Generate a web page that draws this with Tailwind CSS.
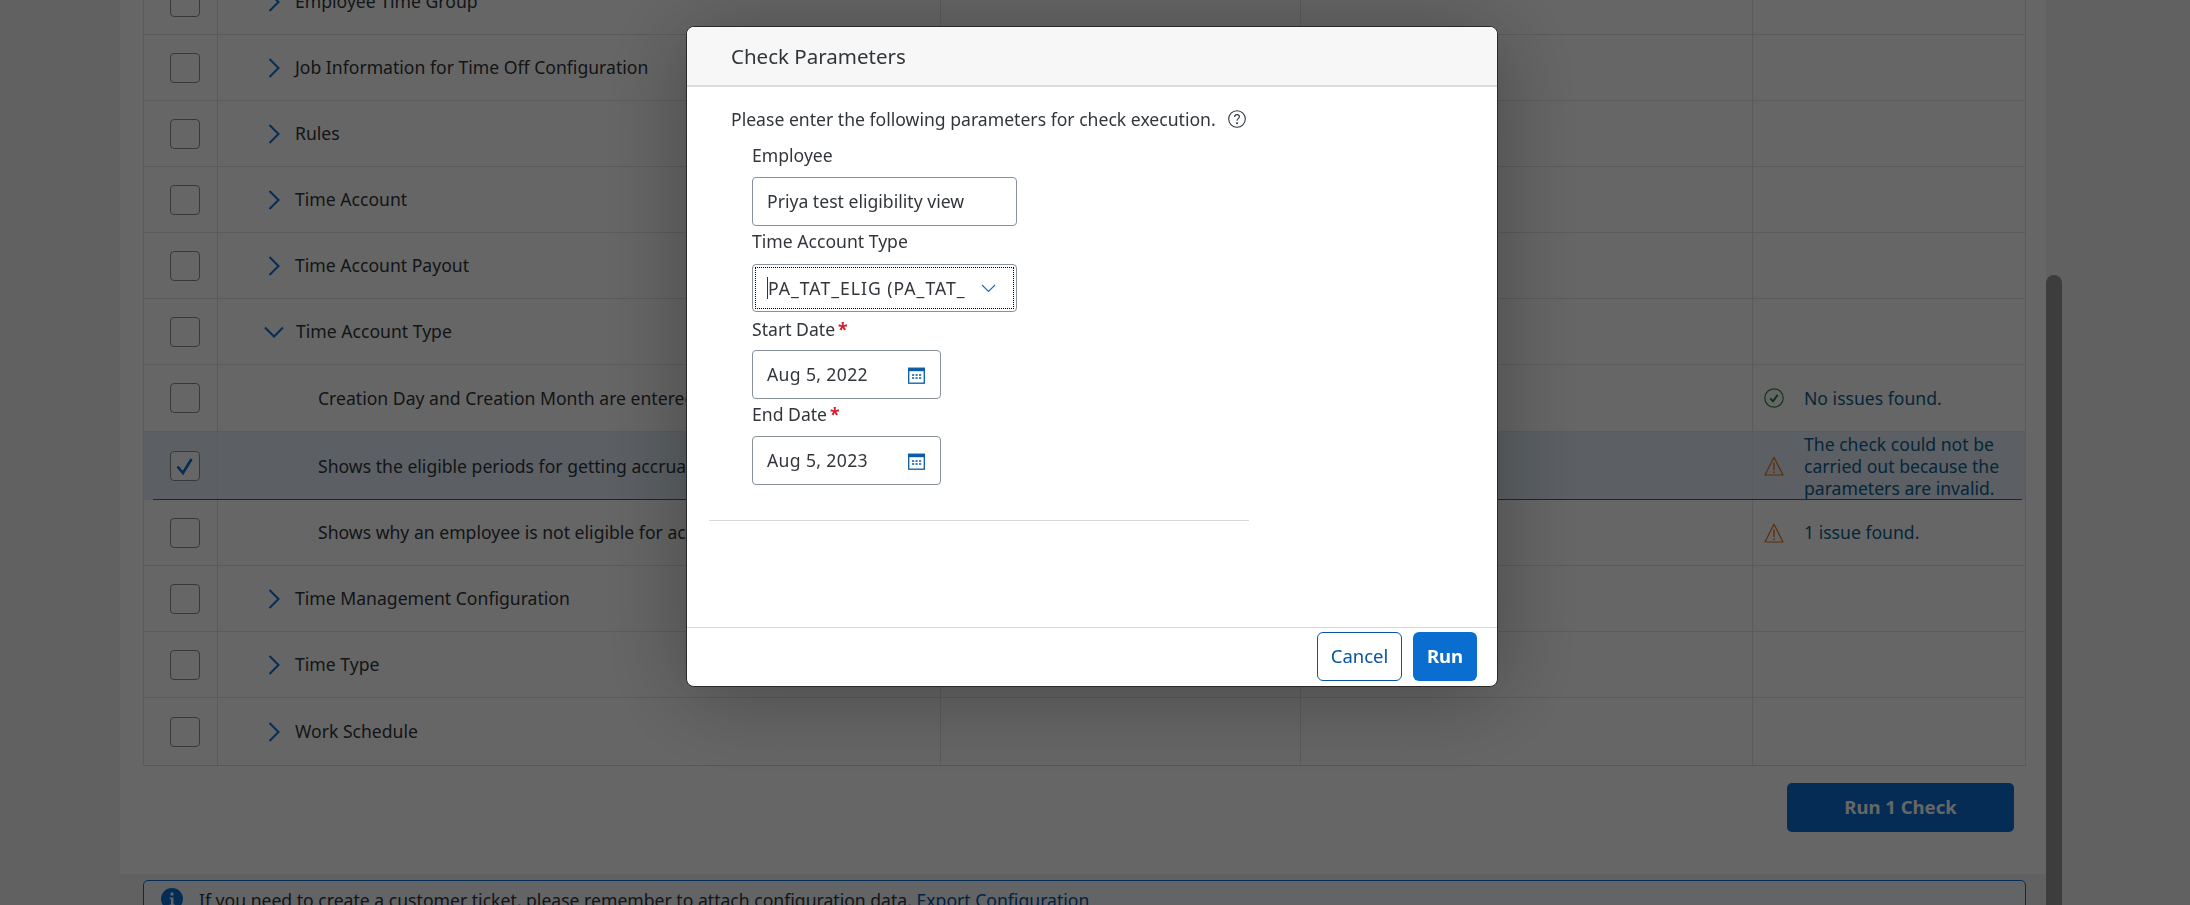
<!DOCTYPE html>
<html lang="en">
<head>
<meta charset="UTF-8">
<title>Check Parameters</title>
<script src="https://cdn.jsdelivr.net/npm/@tailwindcss/browser@4"></script>
</head>
<body class="h-[905px] overflow-hidden bg-[#f2f3f4] font-['Noto_Sans',sans-serif] text-[17.6px] text-[#32363a]">

<!-- Page behind the dialog -->
<div class="ml-[120px] h-[905px] w-[1926px] bg-white pl-[23px]">
  <div class="-mt-[31px] w-[1883px] border-x border-[#e4e4e4]">

    <div class="grid h-[66px] grid-cols-[74px_723px_360px_452px_1fr] border-b border-[#e4e4e4]">
      <div class="flex items-center border-r border-[#e4e4e4] pl-[26px]"><div class="size-[30px] rounded-[4px] border border-[#89919a] bg-white"></div></div>
      <div class="flex items-center border-r border-[#e4e4e4] pl-[50px]"><svg class="mr-[15px] h-[20px] w-[12px]" viewBox="0 0 12 20" fill="none" stroke="#0a6ed1" stroke-width="2"><path d="M1.5 1l9 9-9 9"/></svg>Employee Time Group</div>
      <div class="border-r border-[#e4e4e4]"></div><div class="border-r border-[#e4e4e4]"></div><div></div>
    </div>

    <div class="grid h-[66px] grid-cols-[74px_723px_360px_452px_1fr] border-b border-[#e4e4e4]">
      <div class="flex items-center border-r border-[#e4e4e4] pl-[26px]"><div class="size-[30px] rounded-[4px] border border-[#89919a] bg-white"></div></div>
      <div class="flex items-center border-r border-[#e4e4e4] pl-[50px]"><svg class="mr-[15px] h-[20px] w-[12px]" viewBox="0 0 12 20" fill="none" stroke="#0a6ed1" stroke-width="2"><path d="M1.5 1l9 9-9 9"/></svg>Job Information for Time Off Configuration</div>
      <div class="border-r border-[#e4e4e4]"></div><div class="border-r border-[#e4e4e4]"></div><div></div>
    </div>

    <div class="grid h-[66px] grid-cols-[74px_723px_360px_452px_1fr] border-b border-[#e4e4e4]">
      <div class="flex items-center border-r border-[#e4e4e4] pl-[26px]"><div class="size-[30px] rounded-[4px] border border-[#89919a] bg-white"></div></div>
      <div class="flex items-center border-r border-[#e4e4e4] pl-[50px]"><svg class="mr-[15px] h-[20px] w-[12px]" viewBox="0 0 12 20" fill="none" stroke="#0a6ed1" stroke-width="2"><path d="M1.5 1l9 9-9 9"/></svg>Rules</div>
      <div class="border-r border-[#e4e4e4]"></div><div class="border-r border-[#e4e4e4]"></div><div></div>
    </div>

    <div class="grid h-[66px] grid-cols-[74px_723px_360px_452px_1fr] border-b border-[#e4e4e4]">
      <div class="flex items-center border-r border-[#e4e4e4] pl-[26px]"><div class="size-[30px] rounded-[4px] border border-[#89919a] bg-white"></div></div>
      <div class="flex items-center border-r border-[#e4e4e4] pl-[50px]"><svg class="mr-[15px] h-[20px] w-[12px]" viewBox="0 0 12 20" fill="none" stroke="#0a6ed1" stroke-width="2"><path d="M1.5 1l9 9-9 9"/></svg>Time Account</div>
      <div class="border-r border-[#e4e4e4]"></div><div class="border-r border-[#e4e4e4]"></div><div></div>
    </div>

    <div class="grid h-[66px] grid-cols-[74px_723px_360px_452px_1fr] border-b border-[#e4e4e4]">
      <div class="flex items-center border-r border-[#e4e4e4] pl-[26px]"><div class="size-[30px] rounded-[4px] border border-[#89919a] bg-white"></div></div>
      <div class="flex items-center border-r border-[#e4e4e4] pl-[50px]"><svg class="mr-[15px] h-[20px] w-[12px]" viewBox="0 0 12 20" fill="none" stroke="#0a6ed1" stroke-width="2"><path d="M1.5 1l9 9-9 9"/></svg>Time Account Payout</div>
      <div class="border-r border-[#e4e4e4]"></div><div class="border-r border-[#e4e4e4]"></div><div></div>
    </div>

    <div class="grid h-[66px] grid-cols-[74px_723px_360px_452px_1fr] border-b border-[#e4e4e4]">
      <div class="flex items-center border-r border-[#e4e4e4] pl-[26px]"><div class="size-[30px] rounded-[4px] border border-[#89919a] bg-white"></div></div>
      <div class="flex items-center border-r border-[#e4e4e4] pl-[46px]"><svg class="mr-[12px] h-[12px] w-[20px]" viewBox="0 0 20 12" fill="none" stroke="#0a6ed1" stroke-width="2"><path d="M1 1.5l9 9 9-9"/></svg>Time Account Type</div>
      <div class="border-r border-[#e4e4e4]"></div><div class="border-r border-[#e4e4e4]"></div><div></div>
    </div>

    <!-- Check rows -->
    <div class="grid h-[67px] grid-cols-[74px_723px_360px_452px_1fr] border-b border-[#e4e4e4]">
      <div class="flex items-center border-r border-[#e4e4e4] pl-[26px]"><div class="size-[30px] rounded-[4px] border border-[#89919a] bg-white"></div></div>
      <div class="flex items-center whitespace-nowrap border-r border-[#e4e4e4] pl-[100px]">Creation Day and Creation Month are entered correctly</div>
      <div class="border-r border-[#e4e4e4]"></div><div class="border-r border-[#e4e4e4]"></div>
      <div class="flex items-center text-[#0f5f8f]"><svg class="ml-[11px] mr-[20px] size-[20px] shrink-0" viewBox="0 0 20 20" fill="none"><circle cx="10" cy="10" r="9.2" stroke="#2b8a3e" stroke-width="1.2"/><path d="M6.3 10.4l2.7 2.9 4.6-6.4" stroke="#107e3e" stroke-width="1.8"/></svg>No issues found.</div>
    </div>

    <div class="relative grid h-[68px] grid-cols-[74px_723px_360px_452px_1fr] bg-[#e5f0fa]">
      <div class="flex items-center border-r border-[#e4e4e4] pl-[26px]"><div class="flex size-[30px] items-center justify-center rounded-[4px] border border-[#89919a] bg-white"><svg class="size-[20px]" viewBox="0 0 20 20" fill="none" stroke="#0a6ed1" stroke-width="2.6"><path d="M2.5 10.5l5.5 6.5 8.5-14"/></svg></div></div>
      <div class="flex items-center whitespace-nowrap border-r border-[#e4e4e4] pl-[100px]">Shows the eligible periods for getting accrual</div>
      <div class="border-r border-[#e4e4e4]"></div><div class="border-r border-[#e4e4e4]"></div>
      <div class="flex items-center leading-[22px] text-[#0f5f8f]"><svg class="ml-[11px] mr-[20px] size-[20px] shrink-0" viewBox="0 0 20 20" fill="none"><path d="M10 1.2L19 19H1z" stroke="#e9730c" stroke-width="1.2" stroke-linejoin="round"/><path d="M10 6.5v7.5" stroke="#e9730c" stroke-width="1.4"/><circle cx="10" cy="16.2" r="0.9" fill="#e9730c"/></svg><span class="w-[210px]">The check could not be carried out because the parameters are invalid.</span></div>
      <div class="absolute bottom-0 left-[9px] right-[3px] h-px bg-[#0a6ed1]"></div>
    </div>

    <div class="grid h-[66px] grid-cols-[74px_723px_360px_452px_1fr] border-b border-[#e4e4e4]">
      <div class="flex items-center border-r border-[#e4e4e4] pl-[26px]"><div class="size-[30px] rounded-[4px] border border-[#89919a] bg-white"></div></div>
      <div class="flex items-center whitespace-nowrap border-r border-[#e4e4e4] pl-[100px]">Shows why an employee is not eligible for accrual</div>
      <div class="border-r border-[#e4e4e4]"></div><div class="border-r border-[#e4e4e4]"></div>
      <div class="flex items-center text-[#0f5f8f]"><svg class="ml-[11px] mr-[20px] size-[20px] shrink-0" viewBox="0 0 20 20" fill="none"><path d="M10 1.2L19 19H1z" stroke="#e9730c" stroke-width="1.2" stroke-linejoin="round"/><path d="M10 6.5v7.5" stroke="#e9730c" stroke-width="1.4"/><circle cx="10" cy="16.2" r="0.9" fill="#e9730c"/></svg>1 issue found.</div>
    </div>

    <div class="grid h-[66px] grid-cols-[74px_723px_360px_452px_1fr] border-b border-[#e4e4e4]">
      <div class="flex items-center border-r border-[#e4e4e4] pl-[26px]"><div class="size-[30px] rounded-[4px] border border-[#89919a] bg-white"></div></div>
      <div class="flex items-center border-r border-[#e4e4e4] pl-[50px]"><svg class="mr-[15px] h-[20px] w-[12px]" viewBox="0 0 12 20" fill="none" stroke="#0a6ed1" stroke-width="2"><path d="M1.5 1l9 9-9 9"/></svg>Time Management Configuration</div>
      <div class="border-r border-[#e4e4e4]"></div><div class="border-r border-[#e4e4e4]"></div><div></div>
    </div>

    <div class="grid h-[66px] grid-cols-[74px_723px_360px_452px_1fr] border-b border-[#e4e4e4]">
      <div class="flex items-center border-r border-[#e4e4e4] pl-[26px]"><div class="size-[30px] rounded-[4px] border border-[#89919a] bg-white"></div></div>
      <div class="flex items-center border-r border-[#e4e4e4] pl-[50px]"><svg class="mr-[15px] h-[20px] w-[12px]" viewBox="0 0 12 20" fill="none" stroke="#0a6ed1" stroke-width="2"><path d="M1.5 1l9 9-9 9"/></svg>Time Type</div>
      <div class="border-r border-[#e4e4e4]"></div><div class="border-r border-[#e4e4e4]"></div><div></div>
    </div>

    <div class="grid h-[68px] grid-cols-[74px_723px_360px_452px_1fr] border-b border-[#d9d9d9]">
      <div class="flex items-center border-r border-[#e4e4e4] pl-[26px]"><div class="size-[30px] rounded-[4px] border border-[#89919a] bg-white"></div></div>
      <div class="flex items-center border-r border-[#e4e4e4] pl-[50px]"><svg class="mr-[15px] h-[20px] w-[12px]" viewBox="0 0 12 20" fill="none" stroke="#0a6ed1" stroke-width="2"><path d="M1.5 1l9 9-9 9"/></svg>Work Schedule</div>
      <div class="border-r border-[#e4e4e4]"></div><div class="border-r border-[#e4e4e4]"></div><div></div>
    </div>
  </div>

  <div class="mt-[17px] flex w-[1871px] justify-end">
    <button class="h-[49px] w-[227px] rounded-[5px] bg-[#0a6ed1] pb-[2px] text-[18.5px] font-bold text-white">Run 1 Check</button>
  </div>

  <div class="mt-[48px] flex h-[60px] w-[1883px] items-start rounded-[5px] border border-[#0a6ed1] bg-[#f5faff] pl-[17px] pt-[7px]">
    <svg class="mr-[16px] size-[22px] shrink-0" viewBox="0 0 22 22"><circle cx="11" cy="11" r="11" fill="#0a6ed1"/><circle cx="11" cy="6" r="1.7" fill="#f5faff"/><path d="M8.5 9.5h4v7h1.5v1.5H8.5v-1.5H10V11H8.5z" fill="#f5faff"/></svg>
    <span class="leading-[24px]">If you need to create a customer ticket, please remember to attach configuration data. <a class="text-[#0854a0]">Export Configuration</a></span>
  </div>
</div>

<!-- Scrollbar -->
<div class="fixed left-[2046px] top-[275px] h-[700px] w-[16px] rounded-t-[8px] bg-[#999999]"></div>

<!-- Modal backdrop -->
<div class="fixed inset-0 bg-black/60"></div>

<!-- Dialog -->
<div class="fixed left-[686px] top-[26px] flex h-[661px] w-[812px] flex-col overflow-hidden rounded-[8px] border border-[#2a2a2a] bg-white shadow-[0_8px_90px_rgba(0,0,0,0.3)]">
  <div class="flex h-[60px] shrink-0 items-center border-b-2 border-[#dcdcdc] bg-[#f7f7f7] pl-[44px] text-[20.5px] leading-none">Check Parameters</div>

  <div class="flex-1 pl-[44px]">
    <div class="mt-[21px] flex h-[22px] items-center">
      <span>Please enter the following parameters for check execution.</span>
      <svg class="ml-[12px] size-[18px]" viewBox="0 0 18 18" fill="none" stroke="#32363a" stroke-width="1.1"><circle cx="9" cy="9" r="8.3"/><path d="M6.6 7c0-1.5 1-2.4 2.4-2.4s2.4.9 2.4 2.2c0 1.1-.7 1.6-1.4 2.1-.7.5-1 .9-1 1.8"/><circle cx="9" cy="13.3" r=".5" fill="#32363a"/></svg>
    </div>

    <div class="ml-[21px]">
      <div class="mt-[15px] h-[22px] leading-[20px]">Employee</div>
      <div class="mt-[10px] flex h-[49px] w-[265px] items-center rounded-[4px] border border-[#89919a] pl-[14px]">Priya test eligibility view</div>

      <div class="mt-[5px] h-[22px] leading-[21px]">Time Account Type</div>
      <div class="mt-[11px] flex h-[48px] w-[265px] items-center rounded-[4px] border border-[#89919a] p-[2px]">
        <div class="flex h-full w-full items-center border border-dotted border-black pl-[11px]">
          <div class="w-[198px] overflow-hidden whitespace-nowrap border-l border-[#32363a] leading-[22px] tracking-[1px]">PA_TAT_ELIG (PA_TAT_ELIG)</div>
          <svg class="ml-[16px] h-[9px] w-[15px]" viewBox="0 0 15 9" fill="none" stroke="#0a6ed1" stroke-width="1.1"><path d="M1 1l6.5 6.5L14 1"/></svg>
        </div>
      </div>

      <div class="mt-[6px] h-[22px] leading-[22px]">Start Date<span class="ml-[3px] font-bold text-[#d32030]">*</span></div>
      <div class="mt-[10px] flex h-[49px] w-[189px] items-center rounded-[4px] border border-[#89919a] pl-[14px]">
        <span class="flex-1 tracking-[0.35px]">Aug 5, 2022</span>
        <svg class="mr-[15px] h-[18px] w-[17px]" viewBox="0 0 17 18" fill="none"><rect x=".7" y="2.2" width="15.6" height="15" stroke="#0a5ba8" stroke-width="1.3"/><rect x=".7" y="2.2" width="15.6" height="3" fill="#0a5ba8"/><path d="M4 9h2.2M7.5 9h2.2M11 9h2.2M4 12h2.2M7.5 12h2.2M11 12h2.2" stroke="#0a5ba8" stroke-width="1.6"/></svg>
      </div>

      <div class="mt-[4px] h-[22px] leading-[22px]">End Date<span class="ml-[3px] font-bold text-[#d32030]">*</span></div>
      <div class="mt-[11px] flex h-[49px] w-[189px] items-center rounded-[4px] border border-[#89919a] pl-[14px]">
        <span class="flex-1 tracking-[0.35px]">Aug 5, 2023</span>
        <svg class="mr-[15px] h-[18px] w-[17px]" viewBox="0 0 17 18" fill="none"><rect x=".7" y="2.2" width="15.6" height="15" stroke="#0a5ba8" stroke-width="1.3"/><rect x=".7" y="2.2" width="15.6" height="3" fill="#0a5ba8"/><path d="M4 9h2.2M7.5 9h2.2M11 9h2.2M4 12h2.2M7.5 12h2.2M11 12h2.2" stroke="#0a5ba8" stroke-width="1.6"/></svg>
      </div>
    </div>

    <div class="-ml-[22px] mt-[35px] h-px w-[540px] bg-[#d9d9d9]"></div>
  </div>

  <div class="flex h-[59px] shrink-0 items-center justify-end gap-[11px] border-t border-[#d9d9d9] pr-[20px] pb-[1px]">
    <button class="h-[49px] w-[85px] rounded-[6px] border border-[#0854a0] pb-[2px] text-[18.5px] text-[#0854a0]">Cancel</button>
    <button class="h-[49px] w-[64px] rounded-[6px] bg-[#0a6ed1] pb-[2px] text-[18.5px] font-bold text-white">Run</button>
  </div>
</div>

</body>
</html>
